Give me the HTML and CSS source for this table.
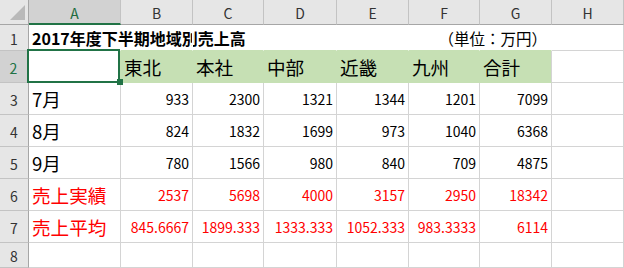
FILE: index.html
```html
<!DOCTYPE html>
<html lang="ja">
<head>
<meta charset="utf-8">
<title>2017年度下半期地域別売上高</title>
<link rel="stylesheet" href="styles.css">
</head>
<body>
<div class="sheet">
  <div class="hd corner"><span class="tri"></span></div>
  <div class="hd col sel">A</div>
  <div class="hd col">B</div>
  <div class="hd col">C</div>
  <div class="hd col">D</div>
  <div class="hd col">E</div>
  <div class="hd col">F</div>
  <div class="hd col">G</div>
  <div class="hd col">H</div>

  <div class="hd row">1</div>
  <div class="c blank title">2017年度下半期地域別売上高</div>
  <div class="c blank"></div>
  <div class="c blank"></div>
  <div class="c blank"></div>
  <div class="c blank"></div>
  <div class="c blank"></div>
  <div class="c blank unit">（単位：万円）</div>
  <div class="c"></div>

  <div class="hd row rsel">2</div>
  <div class="c active"><span class="selbox"></span><span class="handle"></span></div>
  <div class="c green big">東北</div>
  <div class="c green big">本社</div>
  <div class="c green big">中部</div>
  <div class="c green big">近畿</div>
  <div class="c green big">九州</div>
  <div class="c green big last">合計</div>
  <div class="c"></div>

  <div class="hd row">3</div>
  <div class="c big">7月</div>
  <div class="c num">933</div>
  <div class="c num">2300</div>
  <div class="c num">1321</div>
  <div class="c num">1344</div>
  <div class="c num">1201</div>
  <div class="c num">7099</div>
  <div class="c"></div>

  <div class="hd row">4</div>
  <div class="c big">8月</div>
  <div class="c num">824</div>
  <div class="c num">1832</div>
  <div class="c num">1699</div>
  <div class="c num">973</div>
  <div class="c num">1040</div>
  <div class="c num">6368</div>
  <div class="c"></div>

  <div class="hd row">5</div>
  <div class="c big">9月</div>
  <div class="c num">780</div>
  <div class="c num">1566</div>
  <div class="c num">980</div>
  <div class="c num">840</div>
  <div class="c num">709</div>
  <div class="c num">4875</div>
  <div class="c"></div>

  <div class="hd row">6</div>
  <div class="c big red">売上実績</div>
  <div class="c num red">2537</div>
  <div class="c num red">5698</div>
  <div class="c num red">4000</div>
  <div class="c num red">3157</div>
  <div class="c num red">2950</div>
  <div class="c num red">18342</div>
  <div class="c"></div>

  <div class="hd row">7</div>
  <div class="c big red">売上平均</div>
  <div class="c num red">845.6667</div>
  <div class="c num red">1899.333</div>
  <div class="c num red">1333.333</div>
  <div class="c num red">1052.333</div>
  <div class="c num red">983.3333</div>
  <div class="c num red">6114</div>
  <div class="c"></div>

  <div class="hd row">8</div>
  <div class="c"></div>
  <div class="c"></div>
  <div class="c"></div>
  <div class="c"></div>
  <div class="c"></div>
  <div class="c"></div>
  <div class="c"></div>
  <div class="c"></div>
</div>
</body>
</html>
```

FILE: styles.css
```css
html, body {
  margin: 0;
  padding: 0;
  background: #ffffff;
}

.sheet {
  display: grid;
  grid-template-columns: 29px 92px 72px 71px 73px 72px 71px 72px 72px;
  grid-template-rows: 25px 26px repeat(6, 32px) 25px;
  width: 624px;
  font-family: "Noto Sans CJK JP", "Noto Sans", sans-serif;
  color: #000;
}

.sheet > div {
  box-sizing: border-box;
  display: flex;
  align-items: center;
  white-space: nowrap;
  min-width: 0;
}

/* headers */
.hd {
  background: #e6e6e6;
  color: #333;
  font-size: 14px;
  justify-content: center;
  border-right: 1px solid #c3c3c3;
  border-bottom: 1px solid #c3c3c3;
}

.corner {
  position: relative;
  border-bottom-color: #a6a6a6;
  border-right-color: #a6a6a6;
}

.tri {
  position: absolute;
  right: 3px;
  bottom: 4px;
  width: 0;
  height: 0;
  border-left: 15px solid transparent;
  border-bottom: 15px solid #b9b9b9;
}

.col {
  border-bottom-color: #a6a6a6;
  padding-top: 1px;
}

.col.sel {
  background: #d2d2d2;
  color: #1e6b3f;
  border-bottom: 2px solid #217346;
  padding-top: 2px;
}

.row {
  border-right-color: #a6a6a6;
  padding-top: 2px;
}

.row.rsel {
  background: #d2d2d2;
  color: #217346;
  border-right: 2px solid #217346;
}

/* cells */
.c {
  border-right: 1px solid #d4d4d4;
  border-bottom: 1px solid #d4d4d4;
  padding: 0 3px;
  font-size: 14px;
  overflow: visible;
}

.c.blank {
  border-right-color: #ffffff;
  border-bottom-color: #c6e0b4;
}

.title {
  font-size: 16px;
  font-weight: bold;
  padding-left: 3px;
  padding-top: 1px;
}

.unit {
  justify-content: flex-end;
  font-size: 15.5px;
  padding-right: 4px;
  padding-top: 1px;
}

.big {
  font-size: 18.6px;
  padding-left: 3px;
}

.green {
  background: #c6e0b4;
  border-right-color: #c6e0b4;
  border-bottom-color: #c6e0b4;
}

.green.last {
  border-right-color: #d4d4d4;
}

.num {
  justify-content: flex-end;
  padding-right: 3px;
}

.red {
  color: #ff0000;
}

.active {
  position: relative;
  border-right-color: #c6e0b4;
}

.selbox {
  position: absolute;
  left: -2px;
  top: -2px;
  right: 0;
  bottom: -1px;
  border: 2px solid #217346;
  box-sizing: border-box;
  z-index: 2;
}

.handle {
  position: absolute;
  right: -3px;
  bottom: -3px;
  width: 6px;
  height: 6px;
  background: #217346;
  z-index: 3;
}
```
